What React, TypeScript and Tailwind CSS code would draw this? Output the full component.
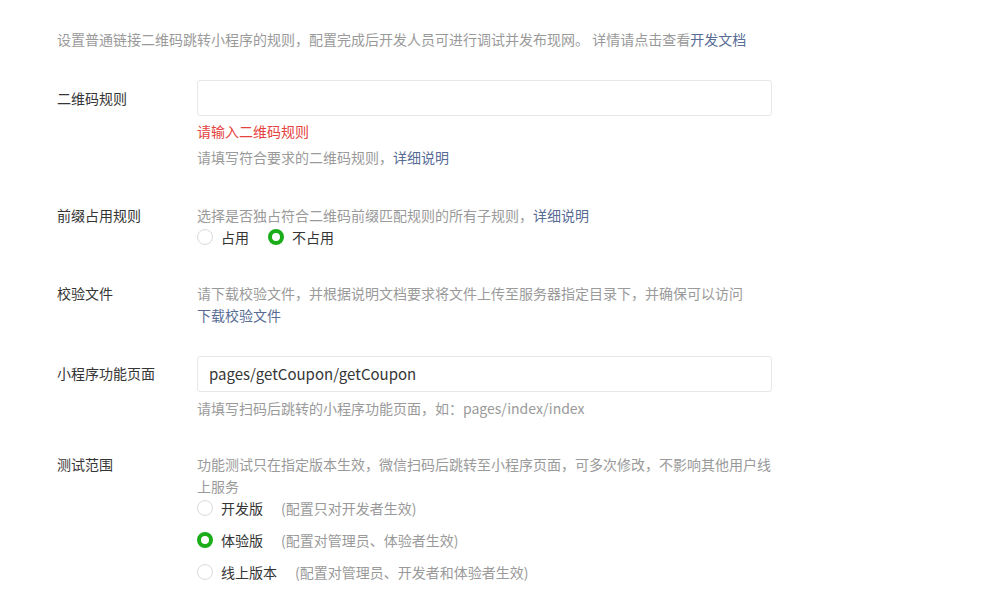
import React from 'react';

const font = { fontFamily: '"Noto Sans CJK SC", "Noto Sans", sans-serif' };

const Radio = ({ checked, label, note }: { checked?: boolean; label: string; note?: string }) => (
  <label className="flex items-center h-[22px]">
    <span
      className={
        checked
          ? 'w-4 h-4 rounded-full border-[4px] border-[#1aad19] bg-white box-border'
          : 'w-4 h-4 rounded-full border border-[#d9dadc] bg-white box-border'
      }
    />
    <span className="ml-2 text-[#353535]">{label}</span>
    {note && <span className="ml-[18px] text-[#9a9a9a]">{note}</span>}
  </label>
);

const Row = ({ label, children }: { label: string; children: React.ReactNode }) => (
  <div className="flex">
    <div className="w-[140px] shrink-0 text-[#353535]">{label}</div>
    <div className="w-[575px]">{children}</div>
  </div>
);

export default function App() {
  return (
    <div className="min-h-[598px] bg-white text-[14px] leading-[22px] pl-[57px]" style={font}>
      {/* Intro */}
      <p className="pt-[28px] text-[#9a9a9a]">
        设置普通链接二维码跳转小程序的规则，配置完成后开发人员可进行调试并发布现网。 详情请点击查看
        <a className="text-[#576b95]">开发文档</a>
      </p>

      <div className="mt-[30px]">
        {/* QR rule */}
        <div className="flex">
          <div className="w-[140px] shrink-0 text-[#353535] pt-[7px]">二维码规则</div>
          <div className="w-[575px]">
            <div className="h-[36px] border border-[#e7e7eb] rounded-[3px]" />
            <p className="mt-[4px] text-[#e64340]">请输入二维码规则</p>
            <p className="mt-[4px] text-[#9a9a9a]">
              请填写符合要求的二维码规则，<a className="text-[#576b95]">详细说明</a>
            </p>
          </div>
        </div>

        {/* Prefix */}
        <div className="mt-[36px]">
          <Row label="前缀占用规则">
            <p className="text-[#9a9a9a]">
              选择是否独占符合二维码前缀匹配规则的所有子规则，<a className="text-[#576b95]">详细说明</a>
            </p>
            <div className="flex gap-[19px]">
              <Radio label="占用" />
              <Radio checked label="不占用" />
            </div>
          </Row>
        </div>

        {/* Verify file */}
        <div className="mt-[34px]">
          <Row label="校验文件">
            <p className="text-[#9a9a9a]">
              请下载校验文件，并根据说明文档要求将文件上传至服务器指定目录下，并确保可以访问
            </p>
            <a className="block text-[#576b95]">下载校验文件</a>
          </Row>
        </div>

        {/* Page */}
        <div className="mt-[30px] flex">
          <div className="w-[140px] shrink-0 text-[#353535] pt-[6px]">小程序功能页面</div>
          <div className="w-[575px]">
            <div className="h-[36px] border border-[#e7e7eb] rounded-[3px] flex items-center px-[11px] text-[15px] text-[#353535]">
              pages/getCoupon/getCoupon
            </div>
            <p className="mt-[5px] text-[#9a9a9a]">
              请填写扫码后跳转的小程序功能页面，如：pages/index/index
            </p>
          </div>
        </div>

        {/* Test scope */}
        <div className="mt-[34px]">
          <Row label="测试范围">
            <p className="text-[#9a9a9a]">
              功能测试只在指定版本生效，微信扫码后跳转至小程序页面，可多次修改，不影响其他用户线上服务
            </p>
            <div className="flex flex-col gap-[10px]">
              <Radio label="开发版" note="(配置只对开发者生效)" />
              <Radio checked label="体验版" note="(配置对管理员、体验者生效)" />
              <Radio label="线上版本" note="(配置对管理员、开发者和体验者生效)" />
            </div>
          </Row>
        </div>
      </div>
    </div>
  );
}
